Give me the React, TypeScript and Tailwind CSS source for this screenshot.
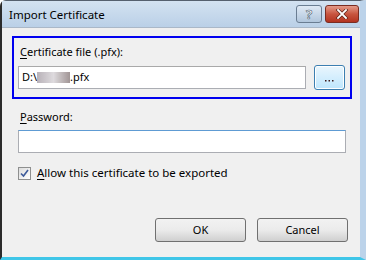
import React from "react";

const font = { fontFamily: '"Noto Sans", "Open Sans", sans-serif' };

function U({ children }: { children: React.ReactNode }) {
  return <span className="underline underline-offset-2">{children}</span>;
}

export default function App() {
  return (
    <div className="w-[366px] h-[260px] bg-white overflow-hidden text-[11px] text-black" style={font}>
      <div className="w-[366px] h-[260px] flex flex-col bg-[#bcd3ea] border-l-2 border-l-[#2b2b2b] border-t border-t-[#55606e] rounded-tl-[6px] border-b-[3px] border-b-[#3fc6e8] border-r-[6px] border-r-[#bcd3ea]">
        {/* title bar */}
        <div className="h-[26px] flex items-start bg-gradient-to-b from-[#d3e2f1] to-[#bad0e7] pl-[7px] pr-[1px]">
          <div className="pt-[6px] text-[11.5px] leading-[16px] text-black">Import Certificate</div>
          <div className="ml-auto flex gap-[3px] pt-[4px]">
            <div className="w-[26px] h-[18px] rounded-[3px] border border-[#6a7d92] bg-gradient-to-b from-[#dfe9f4] to-[#b1c6dc] flex items-center justify-center">
              <span className="text-[13px] font-bold leading-none text-white" style={{ WebkitTextStroke: "0.6px #4a5a6c" }}>?</span>
            </div>
            <div className="w-[34px] h-[18px] rounded-[3px] border border-[#7a2c21] bg-gradient-to-b from-[#e49a89] via-[#c8553f] to-[#b3321e] flex items-center justify-center">
              <svg width="14" height="10" viewBox="0 0 14 10">
                <path d="M3 1 L11 9 M11 1 L3 9" stroke="#5a2218" strokeWidth="3.2" strokeLinecap="square" />
                <path d="M3 1 L11 9 M11 1 L3 9" stroke="#ffffff" strokeWidth="1.8" strokeLinecap="square" />
              </svg>
            </div>
          </div>
        </div>
        {/* client */}
        <div className="flex-1 bg-[#f0f0f0] border-t border-[#aab8c8] flex flex-col pl-[10px] pr-[8px]">
          <div className="mt-[8px] h-[63px] border-2 border-[#0000f0] pl-[6px] pr-[5px] pt-[6px]">
            <div className="leading-[16px]"><U>C</U>ertificate file (.pfx):</div>
            <div className="mt-[5px] flex items-center gap-[8px]">
              <div className="ml-[-2px] flex-1 h-[23px] bg-white border border-[#abadb3] border-t-[#a9a9a9] flex items-center pl-[3px]">
                <span>D:\</span>
                <span className="inline-block w-[33px] h-[11px] bg-gradient-to-r from-[#a8a0a8] via-[#d6d2d6] to-[#8a7c7c] opacity-80 blur-[0.5px]"></span>
                <span>.pfx</span>
              </div>
              <div className="w-[31px] h-[25px] rounded-[3px] border border-[#3c7fb1] bg-gradient-to-b from-[#eaf6fd] to-[#bee6fd] shadow-[inset_0_0_0_1px_#ffffff] flex items-center justify-center">
                <svg width="9" height="3" viewBox="0 0 9 3" className="mt-[6px]">
                  <rect x="0" y="1" width="1.5" height="1.5" fill="#3a1a1a" />
                  <rect x="3.5" y="1" width="1.5" height="1.5" fill="#3a1a1a" />
                  <rect x="7" y="1" width="1.5" height="1.5" fill="#3a1a1a" />
                </svg>
              </div>
            </div>
          </div>
          <div className="mt-[10px] pl-[8px] leading-[16px]"><U>P</U>assword:</div>
          <div className="mt-[5px] ml-[6px] mr-[6px] h-[23px] bg-white border border-[#abadb3] border-t-[#5e9bd3]"></div>
          <div className="mt-[12px] ml-[6px] flex items-center gap-[6px]">
            <div className="w-[13px] h-[13px] border border-[#8e8f8f] bg-gradient-to-br from-[#dcdcdc] to-[#ffffff] flex items-center justify-center">
              <svg width="9" height="9" viewBox="0 0 9 9">
                <path d="M1 4.5 L3.5 7 L8 1" stroke="#3c5a9a" strokeWidth="1.6" fill="none" />
              </svg>
            </div>
            <span className="leading-[16px] text-[11.5px]"><U>A</U>llow this certificate to be exported</span>
          </div>
          <div className="mt-auto mb-[15px] flex justify-end gap-[11px] pr-[4px]">
            <div className="w-[91px] h-[24px] rounded-[3px] border border-[#707070] bg-gradient-to-b from-[#f2f2f2] via-[#ebebeb] to-[#cfcfcf] flex items-center justify-center">OK</div>
            <div className="w-[91px] h-[24px] rounded-[3px] border border-[#707070] bg-gradient-to-b from-[#f2f2f2] via-[#ebebeb] to-[#cfcfcf] flex items-center justify-center">Cancel</div>
          </div>
        </div>
      </div>
    </div>
  );
}
